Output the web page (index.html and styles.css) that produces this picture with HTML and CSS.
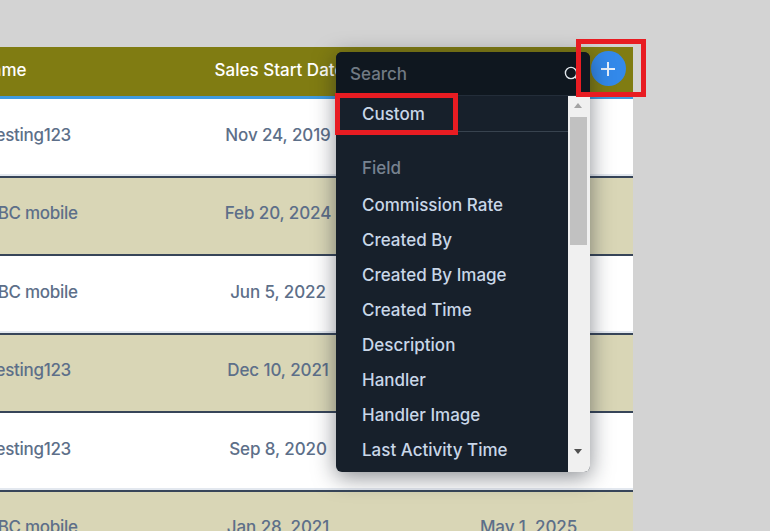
FILE: index.html
```html
<!DOCTYPE html>
<html lang="en">
<head>
<meta charset="utf-8">
<title>Table</title>
<link rel="stylesheet" href="styles.css">
</head>
<body>
<main class="page">
  <section class="table">
    <div class="row head">
      <div class="cell name-head">Name</div>
      <div class="cell date-head">Sales Start Date</div>
      <div class="cell"></div>
    </div>
    <div class="row"><div class="cell name">Testing123</div><div class="cell">Nov 24, 2019</div><div class="cell"></div></div>
    <div class="row alt"><div class="cell name">ABC mobile</div><div class="cell">Feb 20, 2024</div><div class="cell"></div></div>
    <div class="row"><div class="cell name">ABC mobile</div><div class="cell">Jun 5, 2022</div><div class="cell"></div></div>
    <div class="row alt"><div class="cell name">Testing123</div><div class="cell">Dec 10, 2021</div><div class="cell"></div></div>
    <div class="row"><div class="cell name">Testing123</div><div class="cell">Sep 8, 2020</div><div class="cell"></div></div>
    <div class="row alt"><div class="cell name">ABC mobile</div><div class="cell">Jan 28, 2021</div><div class="cell end-date">May 1, 2025</div></div>
  </section>

  <button class="add" type="button" aria-label="Add column">
    <svg viewBox="0 0 18 18" width="18" height="18"><path d="M9 2v14M2 9h14" stroke="#e8f0fb" stroke-width="2" fill="none"/></svg>
  </button>

  <div class="menu">
    <div class="search">
      <span class="search-text">Search</span>
      <svg class="search-icon" viewBox="0 0 16 16" width="16" height="16"><circle cx="7" cy="7" r="5.6" stroke="#dfe5ea" stroke-width="1.4" fill="none"/><path d="M11 11l3 3" stroke="#dfe5ea" stroke-width="1.4"/></svg>
    </div>
    <div class="menu-body">
      <div class="list">
        <div class="item custom">Custom</div>
        <div class="group">Field</div>
        <div class="item">Commission Rate</div>
        <div class="item">Created By</div>
        <div class="item">Created By Image</div>
        <div class="item">Created Time</div>
        <div class="item">Description</div>
        <div class="item">Handler</div>
        <div class="item">Handler Image</div>
        <div class="item">Last Activity Time</div>
      </div>
      <div class="scrollbar">
        <span class="arrow up"></span>
        <span class="thumb"></span>
        <span class="arrow down"></span>
      </div>
    </div>
  </div>

  <div class="mark mark-add"></div>
  <div class="mark mark-custom"></div>
</main>
</body>
</html>
```

FILE: styles.css
```css
* { box-sizing: border-box; }
html, body { margin: 0; height: 100%; }
body { background: #d3d3d3; font-family: Inter, "Liberation Sans", sans-serif; overflow: hidden; }
.page { position: relative; width: 770px; height: 531px; padding-top: 47px; overflow: hidden; }
.table { width: 663px; margin-left: -30px; }
.row {
  display: grid;
  grid-template-columns: 190px 236px 237px;
  height: 78.5px;
  background: #fff;
  border-bottom: 2px solid #374559;
  box-shadow: inset 0 -2px 0 #e3e8ef;
  color: #5d6f89;
  font-size: 17px;
  font-weight: 500;
  letter-spacing: -0.1px;
}
.row.alt { background: #d9d6b6; box-shadow: none; }
.row.head {
  height: 52px;
  background: #807c12;
  border-bottom: 3px solid #3f9be0;
  box-shadow: none;
  color: #fff;
  font-weight: 500;
  letter-spacing: 0;
}
.row.head .cell { padding-bottom: 3px; }
.row.head .date-head { padding-left: 3px; }
.cell { display: flex; align-items: center; justify-content: center; white-space: nowrap; padding-bottom: 5.5px; }
.cell.name { justify-content: flex-start; padding-left: 16px; letter-spacing: -0.3px; }
.cell.name-head { justify-content: flex-start; padding-left: 9px; }
.cell.end-date { padding-left: 28px; }
.add {
  position: absolute; left: 590.5px; top: 51px; width: 35px; height: 35px;
  border: 0; border-radius: 50%; padding: 0;
  background: #3389ea;
  display: flex; align-items: center; justify-content: center;
}
.menu {
  position: absolute; left: 336px; top: 52px; width: 254px; height: 420px;
  border-radius: 6px; overflow: hidden;
  background: #17202b;
  display: flex; flex-direction: column;
  box-shadow: 0 5px 22px rgba(20, 25, 35, .5);
}
.search {
  height: 44px; flex: none; background: #0f171f;
  display: flex; align-items: center;
  padding: 0 0 0 14px; border-bottom: 1px solid #232d39;
}
.search-text { color: #717a84; font-size: 17px; flex: 1; font-weight: 500; }
.search-icon { margin: 0 10px 0 0; }
.menu-body { flex: 1; display: flex; min-height: 0; }
.list { flex: 1; }
.item { height: 35px; display: flex; align-items: center; padding-left: 26px; color: #c9d7e8; font-size: 17px; font-weight: 500; white-space: nowrap; }
.custom { border-bottom: 1px solid #38434f; height: 36px; }
.group { height: 35px; margin-top: 18px; display: flex; align-items: center; padding-left: 26px; color: #788391; font-size: 17px; font-weight: 500; }
.group + .item { margin-top: 2px; }
.scrollbar {
  width: 22px; flex: none; background: #f0f0f0;
  display: flex; flex-direction: column; align-items: flex-start; padding: 7px 0 0 2px;
}
.thumb { width: 17px; height: 128px; background: #c1c1c1; margin-top: 9px; }
.arrow { width: 0; height: 0; margin-left: 4px; border-left: 4.5px solid transparent; border-right: 4.5px solid transparent; }
.arrow.up { border-bottom: 5px solid #a3a3a3; }
.arrow.down { border-top: 5px solid #505050; margin-top: 204px; }
.mark { position: absolute; border: 5px solid #e81c22; }
.mark-add { left: 576px; top: 39px; width: 70px; height: 58px; }
.mark-custom { left: 335px; top: 93px; width: 123px; height: 42px; }
```
